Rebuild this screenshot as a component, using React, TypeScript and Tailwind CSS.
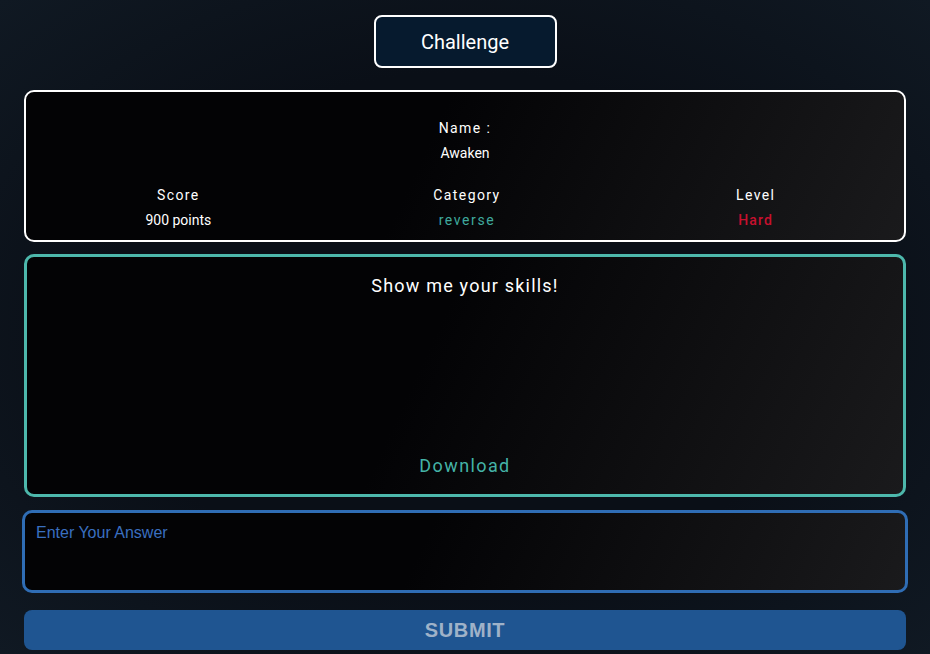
import React from "react";

export default function App() {
  return (
    <div
      className="w-[930px] h-[654px] overflow-hidden bg-[radial-gradient(ellipse_at_center,#0a0f17_55%,#101923_100%)] text-white"
      style={{ fontFamily: "Roboto, 'Liberation Sans', sans-serif" }}
    >
      <div className="flex flex-col px-[24px] pt-[15px]">
        <div className="flex justify-center">
          <button className="w-[183px] h-[53px] rounded-[8px] border-2 border-white bg-[#061a2e] text-[20px] text-white">
            Challenge
          </button>
        </div>

        <div className="mt-[22px] h-[152px] rounded-[10px] border-2 border-white bg-[linear-gradient(115deg,#030305_45%,#1a1a1c)] pt-[24px]">
          <div className="flex flex-col items-center text-[14px] leading-[25px]">
            <div className="tracking-[1.4px]">Name :</div>
            <div>Awaken</div>
          </div>
          <div className="mt-[17px] grid grid-cols-3 pl-[8px] pr-[4px] text-center text-[14px] leading-[25px]">
            <div>
              <div className="tracking-[1.4px]">Score</div>
              <div>900 points</div>
            </div>
            <div>
              <div className="tracking-[1.4px]">Category</div>
              <div className="tracking-[1.6px] text-[#3fa99d]">reverse</div>
            </div>
            <div>
              <div className="tracking-[1.4px]">Level</div>
              <div className="font-medium tracking-[1.2px] text-[#c8102e]">Hard</div>
            </div>
          </div>
        </div>

        <div className="mt-[12px] h-[243px] rounded-[10px] border-[3px] border-[#4db8ac] bg-[linear-gradient(115deg,#030305_45%,#1a1a1c)] pt-[15px] pb-[14px] flex flex-col items-center justify-between">
          <div className="text-[18px] leading-[28px] tracking-[1.2px]">Show me your skills!</div>
          <div className="text-[18px] leading-[28px] tracking-[1.4px] text-[#44b3a7]">Download</div>
        </div>

        <textarea
          placeholder="Enter Your Answer"
          className="mt-[13px] -mx-[2px] h-[83px] resize-none rounded-[10px] border-[3px] border-[#2f6db5] bg-[linear-gradient(115deg,#030305_45%,#1a1a1c)] px-[11px] pt-[10px] text-[16px] leading-[20px] text-white outline-none placeholder:text-[#3a6fc0]"
          style={{ fontFamily: "'Liberation Sans', Arial, sans-serif" }}
        />

        <button
          className="mt-[17px] h-[40px] rounded-[8px] bg-[#1f5591] text-[20px] font-bold tracking-[0.6px] text-[#9fb2c8]"
          style={{ fontFamily: "'Liberation Sans', Arial, sans-serif" }}
        >
          SUBMIT
        </button>
      </div>
    </div>
  );
}
